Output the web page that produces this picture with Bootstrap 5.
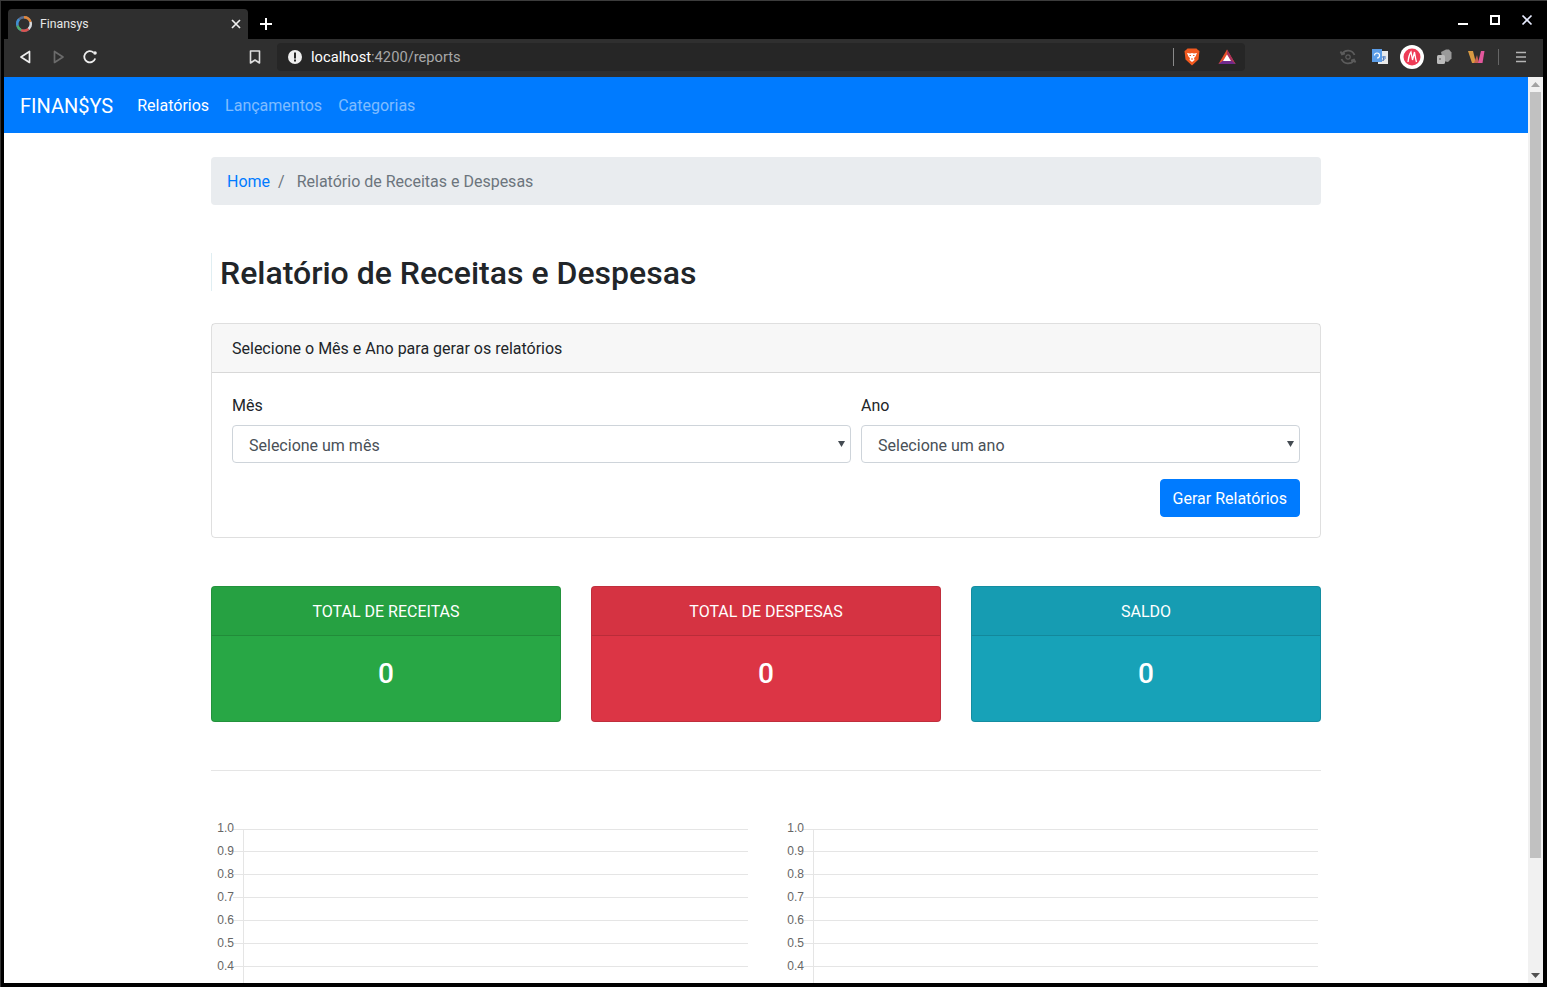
<!DOCTYPE html>
<html lang="en">
<head>
    <meta charset="UTF-8">
    <title>Finansys</title>
    <link rel="stylesheet" href="https://cdn.jsdelivr.net/npm/bootstrap@5.3.0/dist/css/bootstrap.min.css">
    <style>
        html, body { height: 100%; overflow: hidden; background: #000; }
        body { font-family: Roboto, "Liberation Sans", sans-serif; font-size: 16px; color: #212529; }
        .win-frame { height: 100vh; padding: 0 4px 4px 4px; border-top: 1px solid #3c3c3c; box-shadow: inset 1px 0 0 #333; }

        /* browser chrome */
        .tab-strip { height: 38px; padding-left: 4px; }
        .tab-item { width: 240px; height: 30px; margin-top: 8px; background: #2f2f2f; border-radius: 4px 4px 0 0; color: #e8e8e8; font-size: 12.3px; padding: 0 5px 0 7px; }
        .fav-icon { margin-right: 7px; }
        .tab-plus { width: 36px; margin-top: 8px; }
        .win-btns { width: 96px; }
        .win-btn { width: 32px; height: 38px; }
        .tool-bar { height: 38px; background: #2f2f2f; padding: 0 0 2px 6px; }
        .tool-btn { width: 32px; }
        .book-slot { width: 165px; }
        .url-bar { width: 968px; height: 28px; margin-left: 6px; background: #262626; border-radius: 4px; color: #fff; font-size: 14.7px; padding-left: 10px; }
        .url-muted { color: #a8a8a8; }
        .url-sep { width: 1px; height: 18px; background: #8a8a8a; margin-left: 1px; }
        .brave-ic { margin-left: 8px; margin-right: 16px; }
        .bat-ic { margin-right: 9px; }
        .tb-sep { width: 1px; height: 16px; background: #666; margin: 0 6px; }
        .tb-end { width: 2px; }

        /* page */
        .page-view { height: calc(100vh - 81px); }
        .page-main { overflow: hidden; background: #fff; }
        .top-nav { height: 56px; background: #007bff; padding: 2px 16px 0; }
        .top-brand { color: #fff; font-size: 20px; margin-right: 16px; text-decoration: none; }
        .top-link { color: rgba(255,255,255,.5); padding: 8px; text-decoration: none; }
        .top-link.on { color: #fff; }
        .page-wrap { width: 1140px; margin: 0 auto; padding: 0 15px; }
        .crumbs { background: #e9ecef; border-radius: 4px; padding: 13px 16px 11px; margin: 24px 0 0; height: 48px; }
        .crumbs a { color: #007bff; text-decoration: none; }
        .crumb-sep { color: #6c757d; padding: 0 8px; }
        .crumb-now { color: #6c757d; padding-left: 4px; }
        .page-title { font-size: 32px; font-weight: 500; line-height: 38px; margin: 48px 0 32px; padding-left: 8px; padding-top: 1px; height: 38px; border-left: 1px solid #e0eef2; color: #212529; }
        .form-panel { border: 1px solid rgba(0,0,0,.125); border-radius: 4px; height: 215px; }
        .form-panel-head { background: rgba(0,0,0,.03); border-bottom: 1px solid rgba(0,0,0,.125); height: 49px; padding: 0 20px; line-height: 50px; }
        .form-panel-body { padding: 20px; }
        .field-gap { gap: 10px; }
        .field-month { width: 619px; }
        .form-lbl { display: block; height: 24px; padding-top: 1px; margin-bottom: 8px; }
        .sel-native { appearance: none; -webkit-appearance: none; height: 38px; width: 100%; padding: 8px 12px 4px 16px; color: #495057; border: 1px solid #ced4da; border-radius: 4px; font-size: 16px; line-height: 24px;
            background: #fff url("data:image/svg+xml,%3Csvg xmlns='http://www.w3.org/2000/svg' width='7' height='6'%3E%3Cpath d='M0 0h7L3.500 6z' fill='%23444b52'/%3E%3C/svg%3E") no-repeat right 5px top 15px; }
        .gen-btn { background: #007bff; border: 1px solid #007bff; color: #fff; border-radius: 4px; height: 38px; padding: 1px 12px 0; font-size: 16px; }
        .stat-row { margin: 48px -15px 0; --bs-gutter-x: 30px; }
        .stat-box { height: 136px; border-radius: 4px; border: 1px solid rgba(0,0,0,.125); color: #fff; text-align: center; overflow: hidden; }
        .stat-head { height: 49px; line-height: 50px; background: rgba(0,0,0,.03); border-bottom: 1px solid rgba(0,0,0,.125); }
        .stat-val { font-size: 28px; font-weight: 500; line-height: 34px; padding-top: 21px; }
        .stat-green { background: #28a745; }
        .stat-red { background: #dc3545; }
        .stat-blue { background: #17a2b8; }
        .sep-line { margin: 48px 0 0; border: 0; border-top: 1px solid rgba(0,0,0,.1); opacity: 1; }
        .chart-row { margin-top: 48px; width: 1110px; }
        .chart-row svg { display: block; flex: none; }
        .chart-row text { font-family: "Liberation Sans", Arial, sans-serif; font-size: 12px; fill: #666; }
        .chart-row line { stroke: #e5e5e5; stroke-width: 1; }

        /* scrollbar */
        .fake-scroll { width: 15px; background: #f1f1f1; }
        .scroll-thumb { width: 11px; height: 766px; margin: 0 auto; background: #c1c1c1; }
        .scroll-arrow { height: 15px; }
    </style>
</head>
<body>
<div class="win-frame d-flex flex-column">
    <div class="tab-strip d-flex flex-shrink-0">
        <div class="tab-item d-flex align-items-center">
            <svg width="18" height="18" viewBox="0 0 18 18" class="fav-icon flex-shrink-0" fill="none" stroke-width="2.4">
                <circle cx="9" cy="9" r="6.8" stroke="#5a6d8f"/>
                <path d="M9 2.2A6.8 6.8 0 0 1 15.5 7" stroke="#e0863a"/>
                <path d="M15.5 7A6.8 6.8 0 0 1 13.5 14" stroke="#d9d9d9"/>
                <path d="M13.5 14A6.8 6.8 0 0 1 6 15" stroke="#d9534f"/>
                <path d="M6 15A6.8 6.8 0 0 1 2.4 10.5" stroke="#4cae6e"/>
                <path d="M2.4 10.5A6.8 6.8 0 0 1 4 4.4" stroke="#3f8fd2"/>
            </svg>
            <span class="flex-grow-1">Finansys</span>
            <svg width="14" height="14" viewBox="0 0 14 14" stroke="#eee" stroke-width="1.7"><path d="M3 3l8 8M11 3l-8 8"/></svg>
        </div>
        <div class="tab-plus d-flex align-items-center justify-content-center">
            <svg width="14" height="14" viewBox="0 0 14 14" stroke="#fff" stroke-width="2"><path d="M7 1v12M1 7h12"/></svg>
        </div>
        <div class="flex-grow-1"></div>
        <div class="win-btns d-flex">
            <div class="win-btn d-flex align-items-center justify-content-center"><svg width="12" height="12" viewBox="0 0 12 12"><path d="M1 10h10" stroke="#fff" stroke-width="2"/></svg></div>
            <div class="win-btn d-flex align-items-center justify-content-center"><svg width="12" height="12" viewBox="0 0 12 12" fill="none"><rect x="2" y="2" width="8" height="8" stroke="#fff" stroke-width="2"/></svg></div>
            <div class="win-btn d-flex align-items-center justify-content-center"><svg width="12" height="12" viewBox="0 0 12 12"><path d="M1.5 1.500l9 9M10.500 1.500l-9 9" stroke="#e8ecff" stroke-width="1.7"/></svg></div>
        </div>
    </div>

    <div class="tool-bar d-flex align-items-center flex-shrink-0">
        <div class="tool-btn d-flex justify-content-center"><svg width="16" height="16" viewBox="0 0 16 16" fill="none" stroke="#eee" stroke-width="1.7" stroke-linejoin="round"><path d="M11.5 2.5v11L3 8z"/></svg></div>
        <div class="tool-btn d-flex justify-content-center"><svg width="16" height="16" viewBox="0 0 16 16" fill="none" stroke="#6b6b6b" stroke-width="1.7" stroke-linejoin="round"><path d="M4.5 2.5v11L13 8z"/></svg></div>
        <div class="tool-btn d-flex justify-content-center"><svg width="16" height="16" viewBox="0 0 16 16" fill="none" stroke="#eee" stroke-width="1.8"><path d="M13.2 9.5A5.6 5.6 0 1 1 11.6 3.6"/><circle cx="13" cy="4" r="1.8" fill="#eee" stroke="none"/></svg></div>
        <div class="book-slot d-flex"><svg class="ms-auto me-2" width="16" height="16" viewBox="0 0 16 16" fill="none" stroke="#ddd" stroke-width="1.6" stroke-linejoin="round"><path d="M3.5 2h9v12L8 11l-4.500 3z"/></svg></div>
        <div class="url-bar d-flex align-items-center">
            <svg class="me-2" width="16" height="16" viewBox="0 0 16 16"><circle cx="8" cy="8" r="7" fill="#eee"/><rect x="7" y="3.500" width="2" height="6" fill="#262626"/><rect x="7" y="10.500" width="2" height="2" fill="#262626"/></svg>
            <span>localhost<span class="url-muted">:4200/reports</span></span>
            <div class="flex-grow-1"></div>
            <div class="url-sep"></div>
            <svg class="brave-ic" width="20" height="20" viewBox="0 0 20 20"><path d="M5.500 1.500h9l1.500 1.500 1.500 1-1 8.500L10 18.500 3.500 12.500l-1-8.500L4 3z" fill="#f1591f"/><path d="M5 6l3 .5L10 6l2 .5L15 6l-1.500 3.500-1.500 1.500.5 2L10 15l-2.500-2 .5-2-1.500-1.500z" fill="#fff"/><path d="M7.500 8.500h1.500M11 8.500h1.500M9 12h2" stroke="#f1591f" stroke-width="1"/></svg>
            <svg class="bat-ic" width="18" height="18" viewBox="0 0 18 18"><path d="M9 1.500L17.500 16H.5z" fill="#e8512a"/><path d="M9 1.500L17.500 16H13L9 6.500z" fill="#a8325e"/><path d="M.5 16L5 12.500h8l4.500 3.500z" fill="#6f2a8c"/><path d="M9 6.500L13 13H5z" fill="#fff"/></svg>
        </div>
        <div class="flex-grow-1"></div>
        <div class="tool-btn d-flex justify-content-center"><svg width="18" height="18" viewBox="0 0 18 18" fill="none" stroke="#5c5c5c" stroke-width="1.800"><path d="M3 6A7 7 0 0 1 15.500 7M15 12A7 7 0 0 1 2.500 11M1.500 3.500L3 6.500l3-1M16.500 14.500L15 11.500l-3 1"/><circle cx="9" cy="9" r="2.200" stroke-width="1.200"/></svg></div>
        <div class="tool-btn d-flex justify-content-center"><svg width="18" height="18" viewBox="0 0 18 18"><rect x="7" y="3" width="10" height="13" fill="#e9e9e9"/><rect x="1" y="1" width="10" height="13" fill="#5b9de8"/><path d="M3.500 7.500a2.500 2.500 0 1 1 2.500 2.500" fill="none" stroke="#fff" stroke-width="1.200"/><path d="M11 9h4M13 8l-1 5M11.500 13l3-3" stroke="#4a78bd" stroke-width="1" fill="none"/></svg></div>
        <div class="tool-btn d-flex justify-content-center"><svg width="24" height="24" viewBox="0 0 24 24"><circle cx="12" cy="12" r="12" fill="#fff"/><circle cx="12" cy="12" r="8.500" fill="#ee3b56"/><path d="M8 17c.5-4 1.500-8 3-10l1.500 8 2-8c.5 3 1 7 2 10" fill="none" stroke="#fff" stroke-width="1.300"/></svg></div>
        <div class="tool-btn d-flex justify-content-center"><svg width="16" height="16" viewBox="0 0 16 16"><path d="M5 3l5-2.500h3l2.500 3v6L12 13l-5-1z" fill="#9a9a9a"/><rect x="1" y="6" width="8" height="9" rx="1.500" fill="#bcbcbc"/><circle cx="4" cy="10" r="1" fill="#777"/></svg></div>
        <div class="tool-btn d-flex justify-content-center"><svg width="18" height="14" viewBox="0 0 18 14"><path d="M1 1h5l3 12H5z" fill="#d99a42"/><path d="M7 13l3-8 2 8z" fill="#c9624f"/><path d="M11 13l3-12h3.500l-2 12z" fill="#e3579c"/></svg></div>
        <div class="tb-sep"></div>
        <div class="tool-btn d-flex justify-content-center me-1"><svg width="14" height="14" viewBox="0 0 14 14" stroke="#b5b5b5" stroke-width="1.500"><path d="M2 2.500h10M2 7h10M2 11.500h10"/></svg></div>
        <div class="tb-end"></div>
    </div>

    <div class="page-view d-flex flex-grow-1">
        <div class="page-main flex-grow-1">
            <nav class="top-nav d-flex align-items-center">
                <a class="top-brand" href="#">FINAN$YS</a>
                <a class="top-link on" href="#">Relatórios</a>
                <a class="top-link" href="#">Lançamentos</a>
                <a class="top-link" href="#">Categorias</a>
            </nav>
            <div class="page-wrap">
                <div class="crumbs d-flex">
                    <a href="#">Home</a><span class="crumb-sep">/</span><span class="crumb-now">Relatório de Receitas e Despesas</span>
                </div>
                <h1 class="page-title">Relatório de Receitas e Despesas</h1>
                <div class="form-panel">
                    <div class="form-panel-head">Selecione o Mês e Ano para gerar os relatórios</div>
                    <div class="form-panel-body">
                        <div class="d-flex field-gap">
                            <div class="field-month">
                                <label class="form-lbl">Mês</label>
                                <select class="sel-native"><option>Selecione um mês</option></select>
                            </div>
                            <div class="flex-grow-1">
                                <label class="form-lbl">Ano</label>
                                <select class="sel-native"><option>Selecione um ano</option></select>
                            </div>
                        </div>
                        <div class="d-flex justify-content-end mt-3">
                            <button class="gen-btn" type="button">Gerar Relatórios</button>
                        </div>
                    </div>
                </div>
                <div class="row stat-row">
                    <div class="col-4"><div class="stat-box stat-green"><div class="stat-head">TOTAL DE RECEITAS</div><div class="stat-val">0</div></div></div>
                    <div class="col-4"><div class="stat-box stat-red"><div class="stat-head">TOTAL DE DESPESAS</div><div class="stat-val">0</div></div></div>
                    <div class="col-4"><div class="stat-box stat-blue"><div class="stat-head">SALDO</div><div class="stat-val">0</div></div></div>
                </div>
                <hr class="sep-line">
                <div class="chart-row d-flex" id="charts"></div>
            </div>
        </div>
        <div class="fake-scroll flex-shrink-0 d-flex flex-column">
            <div class="scroll-arrow d-flex align-items-center justify-content-center"><svg width="9" height="5" viewBox="0 0 9 5"><path d="M4.500 0L9 5H0z" fill="#a3a3a3"/></svg></div>
            <div class="scroll-thumb"></div>
            <div class="flex-grow-1"></div>
            <div class="scroll-arrow d-flex align-items-center justify-content-center"><svg width="9" height="5" viewBox="0 0 9 5"><path d="M0 0h9L4.500 5z" fill="#505050"/></svg></div>
        </div>
    </div>
</div>

<script src="https://cdn.jsdelivr.net/npm/bootstrap@5.3.0/dist/js/bootstrap.bundle.min.js"></script>
<script>
    // empty charts, y axis only goes as far as the window shows
    function drawChart(width, axisX, endX) {
        const ticks = ["1.0", "0.9", "0.8", "0.7", "0.6", "0.5", "0.4"];
        let out = `<svg width="${width}" height="170">`;
        out += `<line x1="${axisX}.5" y1="10" x2="${axisX}.5" y2="170"/>`;
        ticks.forEach((t, i) => {
            const y = Math.floor(10 + i * 22.9) + 0.5;
            out += `<line x1="${axisX - 10}" y1="${y}" x2="${endX}" y2="${y}"/>`;
            out += `<text x="${axisX - 9}" y="${y + (i ? 3.5 : 2.5)}" text-anchor="end">${t}</text>`;
        });
        return out + "</svg>";
    }
    document.getElementById("charts").innerHTML = drawChart(570, 32, 537) + drawChart(540, 32, 537);
</script>
</body>
</html>
